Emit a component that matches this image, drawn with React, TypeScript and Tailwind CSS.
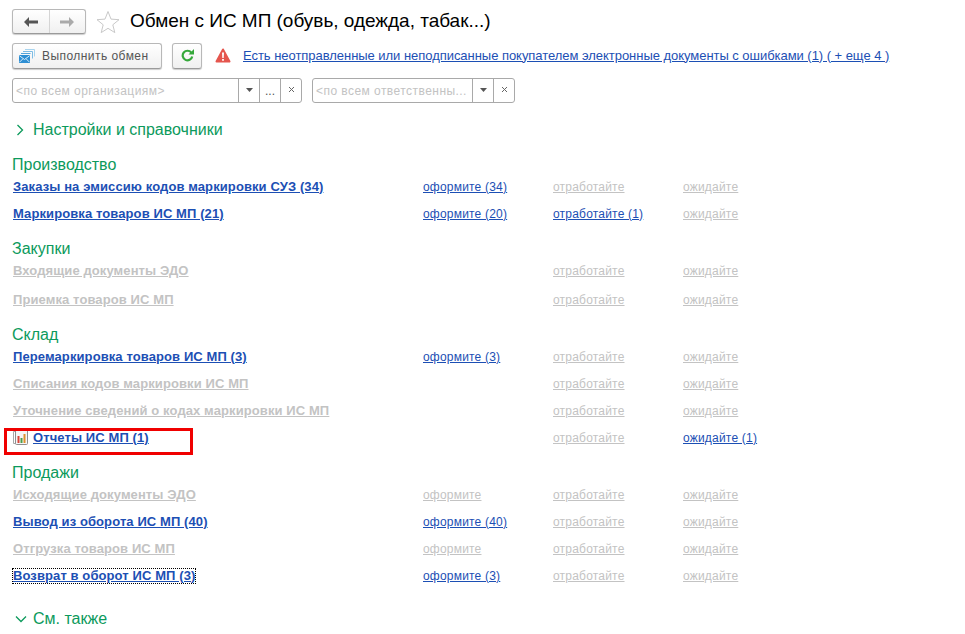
const link = "text-[#1c4fb4] underline";
const off = "text-[#c3c3c3] underline";

type Row = {
  name: string;
  active?: boolean;
  a?: string;
  aOn?: boolean;
  b?: string;
  bOn?: boolean;
  c?: string;
  cOn?: boolean;
  h?: string;
  report?: boolean;
  focus?: boolean;
};

function ReportIcon() {
  return (
    <svg width="17" height="17" viewBox="0 0 17 17" className="mr-[4px] shrink-0">
      <path d="M4 2.500H1.500v12H4" fill="none" stroke="#a8a8a8" />
      <rect x="3.500" y="0.500" width="12" height="15" rx="1" fill="#f6f6f6" stroke="#8e8e8e" />
      <path d="M5.500 7h2v7h-2z" fill="#d8453a" />
      <path d="M8.500 9h2v5h-2z" fill="#4a9e4d" />
      <path d="M11.500 5h2v9h-2z" fill="#e0902c" />
    </svg>
  );
}

function TaskRow({ row }: { row: Row }) {
  return (
    <div className={`grid grid-cols-[410px_130px_130px_1fr] items-center pl-[13px] tracking-[0.2px] ${row.h ?? "h-[27px]"}`}>
      <div className="flex items-center">
        {row.report && <div className="-ml-[1px] -mt-[1px]"><ReportIcon /></div>}
        <span
          className={`text-[13px] font-bold tracking-[0.1px] ${row.active ? link : off} ${
            row.focus ? "outline outline-1 outline-dotted outline-black" : ""
          }`}
        >
          {row.name}
        </span>
      </div>
      <span>{row.a && <span className={row.aOn ? link : off}>{row.a}</span>}</span>
      <span>{row.b && <span className={row.bOn ? link : off}>{row.b}</span>}</span>
      <span>{row.c && <span className={row.cOn ? link : off}>{row.c}</span>}</span>
    </div>
  );
}

function Heading({ text }: { text: string }) {
  return <div className="flex h-[18px] items-center pl-[12px] pt-[2px] text-[16px] text-[#0c9a5c]">{text}</div>;
}

const ar = "отработайте";
const wa = "ожидайте";
const of = "оформите";

const production: Row[] = [
  { name: "Заказы на эмиссию кодов маркировки СУЗ (34)", active: true, a: "оформите (34)", aOn: true, b: ar, c: wa },
  { name: "Маркировка товаров ИС МП (21)", active: true, a: "оформите (20)", aOn: true, b: "отработайте (1)", bOn: true, c: wa },
];
const purchases: Row[] = [
  { name: "Входящие документы ЭДО", b: ar, c: wa },
  { name: "Приемка товаров ИС МП", b: ar, c: wa, h: "h-[31px]" },
];
const stock: Row[] = [
  { name: "Перемаркировка товаров ИС МП (3)", active: true, a: "оформите (3)", aOn: true, b: ar, c: wa },
  { name: "Списания кодов маркировки ИС МП", b: ar, c: wa },
  { name: "Уточнение сведений о кодах маркировки ИС МП", b: ar, c: wa },
  { name: "Отчеты ИС МП (1)", active: true, report: true, b: ar, c: "ожидайте (1)", cOn: true },
];
const sales: Row[] = [
  { name: "Исходящие документы ЭДО", a: of, b: ar, c: wa },
  { name: "Вывод из оборота ИС МП (40)", active: true, a: "оформите (40)", aOn: true, b: ar, c: wa },
  { name: "Отгрузка товаров ИС МП", a: of, b: ar, c: wa },
  { name: "Возврат в оборот ИС МП (3)", active: true, focus: true, a: "оформите (3)", aOn: true, b: ar, c: wa },
];

const btn = "rounded-[3px] border border-[#b8b8b8] border-b-[#9a9a9a] bg-gradient-to-b from-white to-[#f0f0f0] shadow-[0_1px_1px_rgba(0,0,0,0.2)]";

function Select({ width, text, extra }: { width: string; text: string; extra?: boolean }) {
  return (
    <div className={`flex h-[25px] items-stretch rounded-[3px] border border-[#a9a9a9] bg-white ${width}`}>
      <div className="flex min-w-0 flex-1 items-center pl-[3px] text-[#c3c3c3] tracking-[0.45px] whitespace-nowrap overflow-hidden">{text}</div>
      <div className="flex w-[21px] items-center justify-center border-l border-[#a9a9a9]">
        <svg width="7" height="4" viewBox="0 0 7 4" className="-mt-[2px]"><path d="M0 0h7L3.500 4z" fill="#555" /></svg>
      </div>
      {extra && <div className="flex w-[21px] items-end justify-center border-l border-[#a9a9a9] pb-[5px] text-[#555] leading-[12px]">...</div>}
      <div className="flex w-[21px] items-center justify-center border-l border-[#a9a9a9]">
        <svg width="7" height="7" viewBox="0 0 7 7" className="-mt-[2px]"><path d="M1 1l5 5M6 1L1 6" stroke="#666" /></svg>
      </div>
    </div>
  );
}

export default function App() {
  return (
    <div className="relative h-[634px] w-[965px] overflow-hidden bg-white font-['Liberation_Sans',Arial,sans-serif] text-[12px] leading-[14px]">
      <div className="flex h-[42px] items-center pl-[12px] pt-[1px]">
        <div className={`flex h-[25px] w-[74px] ${btn}`}>
          <div className="flex flex-1 items-center justify-center border-r border-[#d5d5d5]">
            <svg width="14" height="10" viewBox="0 0 14 10"><path d="M0 5l5-5v3.500h9v3H5V10z" fill="#555" /></svg>
          </div>
          <div className="flex flex-1 items-center justify-center">
            <svg width="14" height="10" viewBox="0 0 14 10"><path d="M14 5L9 0v3.500H0v3h9V10z" fill="#aaa" /></svg>
          </div>
        </div>
        <svg width="24" height="24" viewBox="0 0 24 24" className="ml-[10px]">
          <path d="M12 1.500l3 7.600 8 .6-6.200 5.100 2 7.800L12 18.300l-6.800 4.300 2-7.800L1 9.700l8-.6z" fill="none" stroke="#c9c9c9" />
        </svg>
        <h1 className="ml-[10px] -mt-[2px] text-[19px] tracking-[-0.02px] text-black">Обмен с ИС МП (обувь, одежда, табак...)</h1>
      </div>

      <div className="flex h-[27px] items-center pl-[12px]">
        <div className={`flex h-[26px] w-[150px] items-center pl-[6px] text-[#555] ${btn}`}>
          <svg width="16" height="14" viewBox="0 0 16 14" className="mr-[7px]">
            <path d="M6 0.500h9.500v7" fill="none" stroke="#a9d4ee" />
            <path d="M4 2.500h9.500v7" fill="none" stroke="#7dbce4" />
            <path d="M2 4.500h9.500" fill="none" stroke="#55a4da" />
            <rect x="0" y="6" width="11" height="8" rx="0.500" fill="#2f8fd3" />
            <path d="M0.500 6.800l5 3.700 5-3.700M0.500 13.200l3.500-3.500M10.500 13.200L7 9.700" fill="none" stroke="#fff" strokeWidth="0.800" />
          </svg>
          <span className="tracking-[0.45px]">Выполнить обмен</span>
        </div>
        <div className={`ml-[10px] flex h-[26px] w-[30px] items-center justify-center ${btn}`}>
          <svg width="13" height="13" viewBox="0 0 13 13">
            <path d="M10.300 3.600A4.800 4.800 0 1 0 11.200 7.500" fill="none" stroke="#35a83a" strokeWidth="2.200" />
            <path d="M7.500 5.500h5.500V0z" fill="#35a83a" />
          </svg>
        </div>
        <svg width="16" height="15" viewBox="0 0 16 15" className="ml-[13px]">
          <path d="M8 1.500l6.500 12h-13z" fill="#e5564e" stroke="#e5564e" strokeWidth="2" strokeLinejoin="round" />
          <path d="M7 4.500h2l-.3 5.500H7.300zM7.100 11h1.800v1.800H7.100z" fill="#fff" />
        </svg>
        <a className="ml-[12px] text-[13px] text-[#1c4fb4] underline tracking-[-0.04px]">
          Есть неотправленные или неподписанные покупателем электронные документы с ошибками (1) ( + еще 4 )
        </a>
      </div>

      <div className="mt-[9px] flex gap-[10px] pl-[12px]">
        <Select width="w-[290px]" text="<по всем организациям>" extra />
        <Select width="w-[203px]" text="<по всем ответственны..." />
      </div>

      <div className="mt-[16px] flex h-[22px] items-center pl-[16px] text-[16px] text-[#0c9a5c]">
        <svg width="9" height="12" viewBox="0 0 9 12" className="mr-[8px]"><path d="M1.500 1l5 5-5 5" fill="none" stroke="#0c9a5c" strokeWidth="1.300" /></svg>
        Настройки и справочники
      </div>

      <div className="mt-[14px]">
        <Heading text="Производство" />
        {production.map((r) => <TaskRow key={r.name} row={r} />)}
      </div>
      <div className="mt-[12px]">
        <Heading text="Закупки" />
        {purchases.map((r) => <TaskRow key={r.name} row={r} />)}
      </div>
      <div className="mt-[10px]">
        <Heading text="Склад" />
        {stock.map((r) => <TaskRow key={r.name} row={r} />)}
      </div>
      <div className="mt-[12px]">
        <Heading text="Продажи" />
        {sales.map((r) => <TaskRow key={r.name} row={r} />)}
      </div>

      <div className="mt-[19px] flex h-[22px] items-center pl-[15px] text-[16px] text-[#0c9a5c]">
        <svg width="12" height="9" viewBox="0 0 12 9" className="mr-[6px]"><path d="M1 1.500l5 5 5-5" fill="none" stroke="#0c9a5c" strokeWidth="1.300" /></svg>
        См. также
      </div>

      {/* annotation drawn over the report row */}
      <div className="absolute left-[4px] top-[428px] h-[27px] w-[189px] border-[3px] border-[#f00000]" />
    </div>
  );
}
